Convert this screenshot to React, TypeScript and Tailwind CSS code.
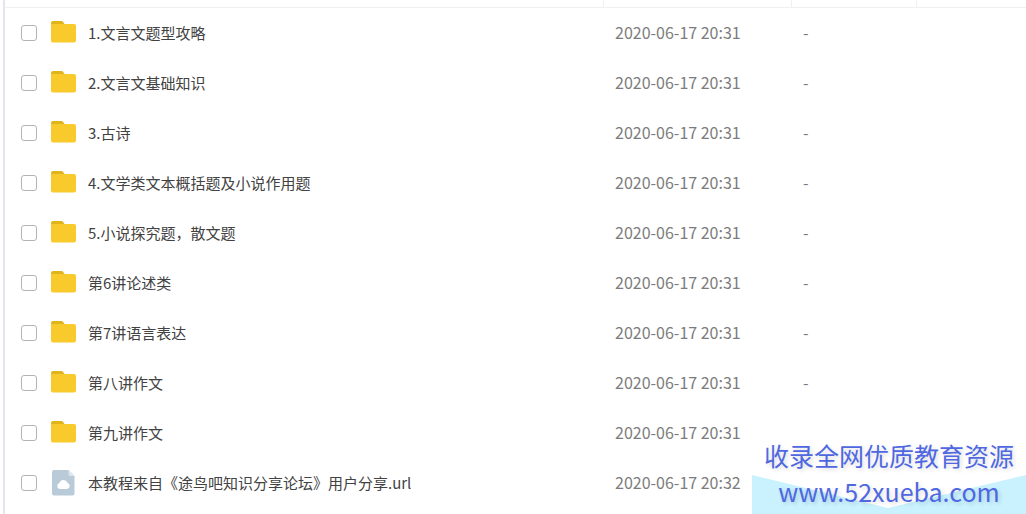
import { useState } from "react";

type FileItem = {
  name: string;
  date: string;
  size?: string;
  type: "folder" | "file";
};

const files: FileItem[] = [
  { name: "1.文言文题型攻略", date: "2020-06-17 20:31", size: "-", type: "folder" },
  { name: "2.文言文基础知识", date: "2020-06-17 20:31", size: "-", type: "folder" },
  { name: "3.古诗", date: "2020-06-17 20:31", size: "-", type: "folder" },
  { name: "4.文学类文本概括题及小说作用题", date: "2020-06-17 20:31", size: "-", type: "folder" },
  { name: "5.小说探究题，散文题", date: "2020-06-17 20:31", size: "-", type: "folder" },
  { name: "第6讲论述类", date: "2020-06-17 20:31", size: "-", type: "folder" },
  { name: "第7讲语言表达", date: "2020-06-17 20:31", size: "-", type: "folder" },
  { name: "第八讲作文", date: "2020-06-17 20:31", size: "-", type: "folder" },
  { name: "第九讲作文", date: "2020-06-17 20:31", type: "folder" },
  { name: "本教程来自《途鸟吧知识分享论坛》用户分享.url", date: "2020-06-17 20:32", type: "file" },
];

const FolderIcon = () => (
  <svg width="26" height="26" viewBox="0 0 26 26" className="shrink-0" aria-hidden="true">
    <path d="M0 3a2 2 0 0 1 2-2h8.500a2 2 0 0 1 1.600.8L13.500 4v3H0z" fill="#e0b51c" />
    <path d="M0 4h23a2 2 0 0 1 2 2v14.500a2 2 0 0 1-2 2H2a2 2 0 0 1-2-2z" fill="#f8ca2c" />
  </svg>
);

const CloudFileIcon = () => (
  <svg width="26" height="26" viewBox="0 0 26 26" className="shrink-0" aria-hidden="true">
    <path d="M3 0h14.500l6 6v17.500a2 2 0 0 1-2 2H3a2 2 0 0 1-2-2V2a2 2 0 0 1 2-2z" fill="#b9cad8" />
    <path d="M17.500 0l6 6h-4a2 2 0 0 1-2-2z" fill="#dce6ee" />
    <path d="M9 19a3 3 0 0 1-.5-5.900 4.200 4.200 0 0 1 8-.3A3.200 3.200 0 0 1 16 19z" fill="#fff" />
  </svg>
);

const Watermark = () => (
  <div className="fixed right-0 bottom-0 w-[274px] bg-white pt-2 pb-[5px] text-center text-[25px] leading-9 text-[#4f68e2]">
    <svg
      className="absolute inset-x-0 bottom-0 h-10 w-full"
      viewBox="0 0 274 40"
      preserveAspectRatio="none"
      aria-hidden="true"
    >
      <path d="M0 1l136 33L274 1v39H0z" fill="#c9f2fe" />
    </svg>
    <p className="relative text-shadow-[2px_2px_4px_#00000024]">收录全网优质教育资源</p>
    <a href="http://www.52xueba.com" className="relative block text-shadow-[2px_2px_4px_#00000024]">
      www.52xueba.com
    </a>
  </div>
);

const App = () => {
  const [selected, setSelected] = useState<string[]>([]);

  const toggle = (name: string) => {
    setSelected((prev) => (prev.includes(name) ? prev.filter((n) => n !== name) : [...prev, name]));
  };

  return (
    <main className="min-h-screen bg-white pl-[3px] font-['Noto_Sans_CJK_SC',sans-serif]">
      <div className="min-h-screen border-l-2 border-[#e4e6ee]">
        <table className="w-full table-fixed border-separate border-spacing-0 text-left">
          <thead>
            <tr className="h-2">
              <th className="border-r border-b border-[#f0f0f2] p-0" aria-label="文件名" />
              <th className="w-[188px] border-r border-b border-[#f0f0f2] p-0" aria-label="修改时间" />
              <th className="w-[125px] border-r border-b border-[#f0f0f2] p-0" aria-label="大小" />
              <th className="w-[109px] border-b border-[#f0f0f2] p-0" aria-label="操作" />
            </tr>
          </thead>
          <tbody>
            {files.map((file) => (
              <tr key={file.name} className="h-[50px]">
                <td className="p-0 pl-4">
                  <label className="flex items-center text-[15px] leading-6 text-[#424242]">
                    <input
                      type="checkbox"
                      checked={selected.includes(file.name)}
                      onChange={() => toggle(file.name)}
                      className="mr-[14px] size-4 shrink-0 appearance-none rounded-[3px] border border-[#b4b4b4] bg-white checked:bg-[#4961dc]"
                    />
                    {file.type === "folder" ? <FolderIcon /> : <CloudFileIcon />}
                    <span className="ml-[11px] truncate">{file.name}</span>
                  </label>
                </td>
                <td className="p-0 pb-0.5 pl-[11px] text-base text-[#7c7c7c]">{file.date}</td>
                <td className="p-0 pb-0.5 pl-[11px] text-base text-[#7c7c7c]">{file.size}</td>
                <td className="p-0" />
              </tr>
            ))}
          </tbody>
        </table>
      </div>
      <Watermark />
    </main>
  );
};

export default App;
